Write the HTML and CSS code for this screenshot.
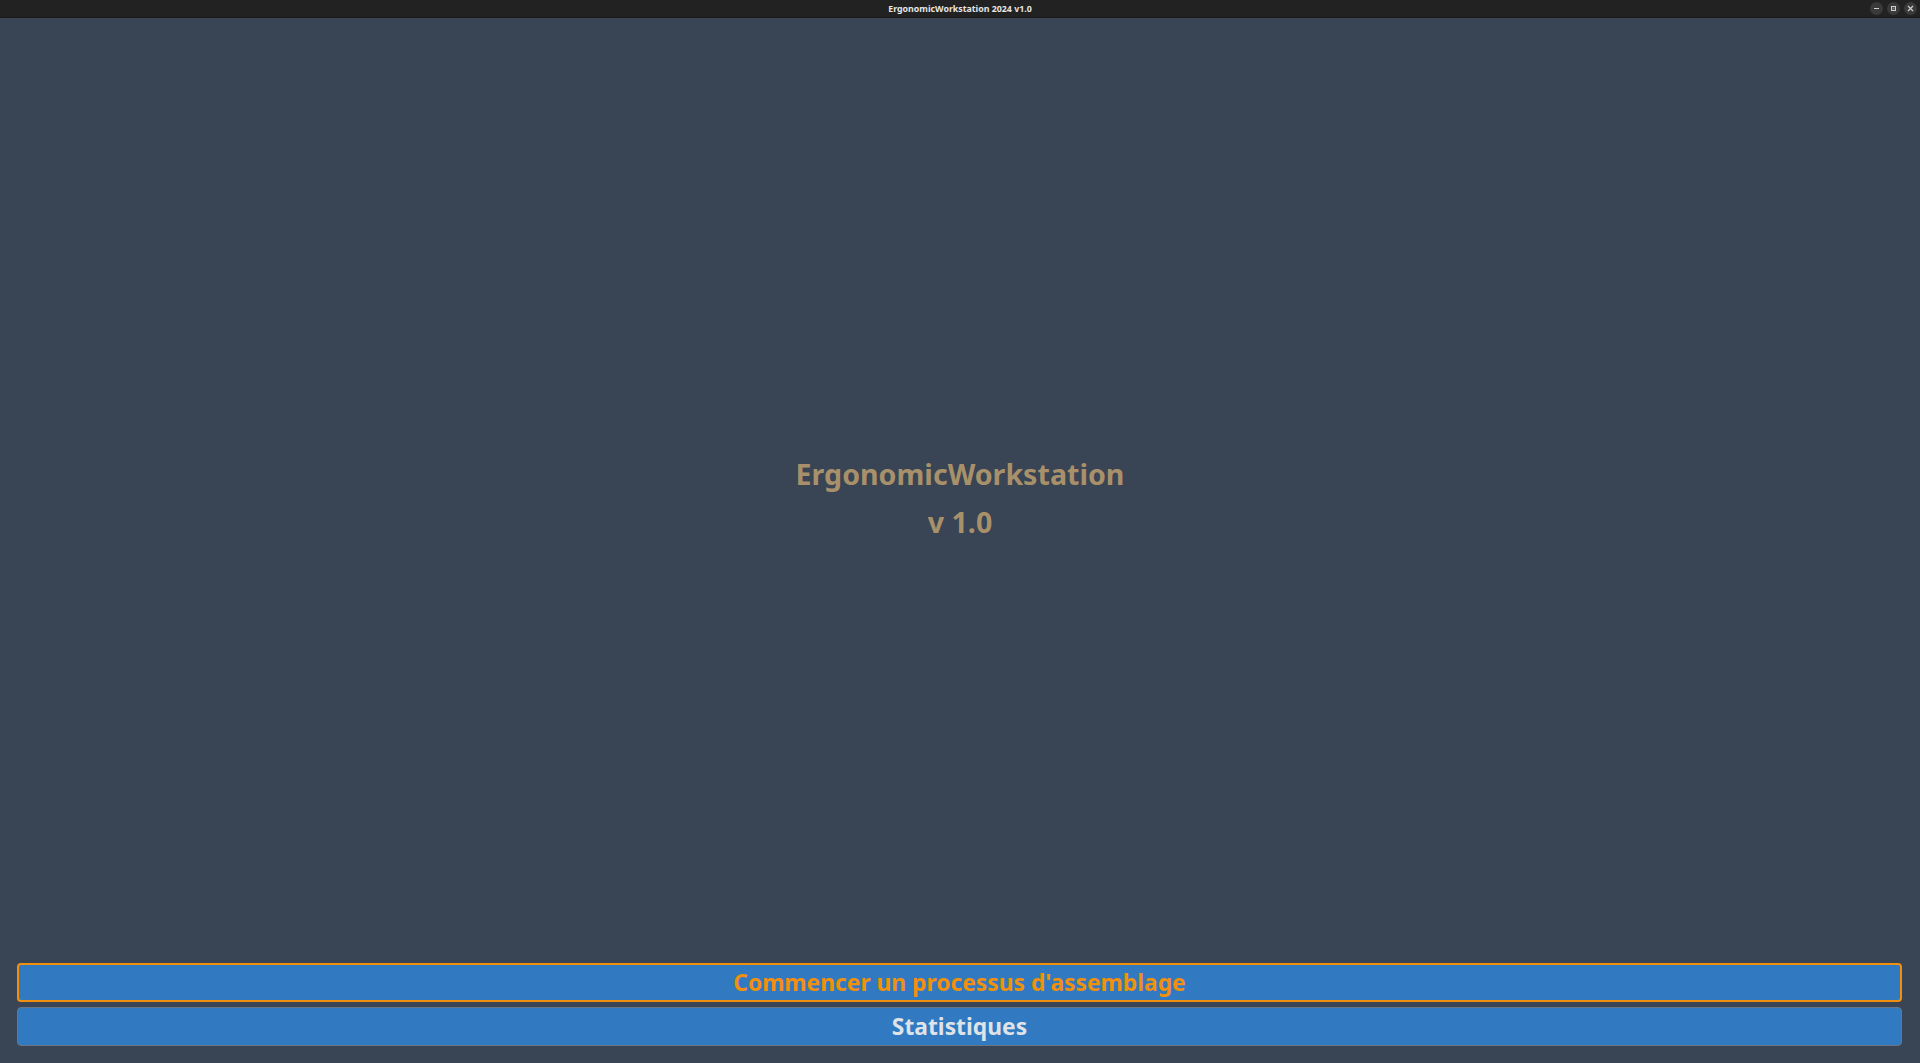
FILE: index.html
```html
<!DOCTYPE html>
<html lang="fr">
<head>
<meta charset="utf-8">
<title>ErgonomicWorkstation 2024 v1.0</title>
<link rel="stylesheet" href="styles.css">
</head>
<body>
<div class="window">
  <header class="titlebar">
    <span class="title">ErgonomicWorkstation 2024 v1.0</span>
    <div class="controls">
      <span class="ctl"><svg width="13" height="13" viewBox="0 0 13 13"><rect x="4" y="6" width="5" height="1" fill="#cfcfcf"/></svg></span>
      <span class="ctl"><svg width="13" height="13" viewBox="0 0 13 13"><rect x="4.5" y="4.5" width="4" height="4" fill="none" stroke="#cfcfcf" stroke-width="1"/><rect x="5.5" y="5.5" width="2" height="2" fill="#808080"/></svg></span>
      <span class="ctl"><svg width="13" height="13" viewBox="0 0 13 13"><path d="M4 4 L9 9 M9 4 L4 9" stroke="#cfcfcf" stroke-width="1.2"/></svg></span>
    </div>
  </header>
  <main class="content">
    <div class="splash">
      <div class="app-name">ErgonomicWorkstation</div>
      <div class="app-version">v 1.0</div>
    </div>
  </main>
  <footer class="actions">
    <button class="btn btn-primary">Commencer un processus d'assemblage</button>
    <button class="btn btn-secondary">Statistiques</button>
  </footer>
</div>
</body>
</html>
```
FILE: styles.css
```css
html, body {
  margin: 0;
  padding: 0;
  height: 100%;
}
body {
  background: #394455;
  font-family: "Noto Sans", "Open Sans", sans-serif;
}
.window {
  display: flex;
  flex-direction: column;
  height: 100vh;
}
.titlebar {
  height: 18px;
  flex: 0 0 18px;
  background: #222222;
  border-bottom: 1px solid #1a1a1a;
  box-sizing: border-box;
  display: flex;
  align-items: center;
  justify-content: center;
  position: relative;
}
.title {
  color: #e6e6e6;
  font-size: 8.8px;
  font-weight: 700;
}
.controls {
  position: absolute;
  right: 3px;
  top: 2px;
  display: flex;
  gap: 4px;
}
.ctl {
  width: 13px;
  height: 13px;
  border-radius: 50%;
  background: #3a3a3a;
  display: flex;
}
.content {
  flex: 1;
  display: flex;
  align-items: center;
  justify-content: center;
  padding-top: 14px;
}
.splash {
  text-align: center;
  color: #a8916a;
  font-weight: 700;
  font-size: 28.6px;
  line-height: 48px;
}
.actions {
  display: flex;
  flex-direction: column;
  gap: 5px;
  padding: 0 18px 17px 17px;
}
.btn {
  height: 39px;
  border-radius: 4px;
  background: #3179c1;
  font-family: "Noto Sans", "Open Sans", sans-serif;
  font-weight: 700;
  font-size: 22.8px;
  padding: 0;
  cursor: pointer;
}
.btn-primary {
  border: 2px solid #f0900c;
  color: #f0900c;
}
.btn-secondary {
  border: 1px solid #6a7482;
  color: #dfe3e8;
}
```
